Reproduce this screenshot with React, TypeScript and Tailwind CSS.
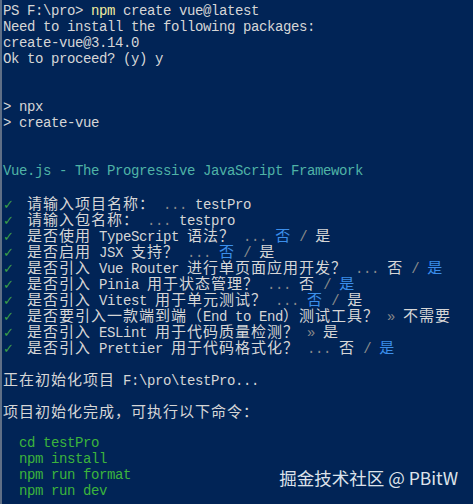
const CJK = /([\u2e80-\u9fff\uff00-\uffef\u3000-\u303f]+)/;

function Txt({ s }: { s: string }) {
  return (
    <>
      {s.split(CJK).map((part, i) =>
        CJK.test(part) ? (
          <span
            key={i}
            className="inline-block h-[16px] font-['Noto_Sans_CJK_SC',sans-serif] text-[15px] tracking-[1px] leading-[16px]"
          >
            {part}
          </span>
        ) : (
          <span key={i}>{part}</span>
        )
      )}
    </>
  );
}

function Line({ children }: { children?: React.ReactNode }) {
  return <div className="h-[16px] leading-[16px] whitespace-pre">{children}</div>;
}

const Check = () => (
  <span className="inline-block w-[16px] h-[16px] text-[#3c9f46] font-['DejaVu_Sans',sans-serif] text-[13px]">✓</span>
);

function Choice({ pick }: { pick: "no" | "yes" }) {
  const on = "text-[#3b8eea] underline underline-offset-2";
  return (
    <>
      <span className={pick === "no" ? on : ""}>
        <Txt s="否" />
      </span>
      <span className="text-[#8a8a8a]"> / </span>
      <span className={pick === "yes" ? on : ""}>
        <Txt s="是" />
      </span>
    </>
  );
}

interface Q {
  label: string;
  sep?: "..." | "»";
  answer?: string;
  pick?: "no" | "yes";
}

const questions: Q[] = [
  { label: "请输入项目名称：", answer: "testPro" },
  { label: "请输入包名称：", answer: "testpro" },
  { label: "是否使用 TypeScript 语法？", pick: "no" },
  { label: "是否启用 JSX 支持？", pick: "no" },
  { label: "是否引入 Vue Router 进行单页面应用开发？", pick: "yes" },
  { label: "是否引入 Pinia 用于状态管理？", pick: "yes" },
  { label: "是否引入 Vitest 用于单元测试？", pick: "no" },
  { label: "是否要引入一款端到端（End to End）测试工具？", sep: "»", answer: "不需要" },
  { label: "是否引入 ESLint 用于代码质量检测？", sep: "»", answer: "是" },
  { label: "是否引入 Prettier 用于代码格式化？", pick: "yes" },
];

export default function App() {
  return (
    <div className="relative w-[473px] h-[504px] overflow-hidden bg-[#012456] border-l-2 border-[#5f6f86] pl-[1px] pt-[3px] text-[#d6d6d6] font-['Liberation_Mono',monospace] text-[14px] tracking-[-0.4px]">
      <Line>
        PS F:\pro&gt; <span className="text-[#f1eea0]">npm</span> create vue@latest
      </Line>
      <Line>Need to install the following packages:</Line>
      <Line>create-vue@3.14.0</Line>
      <Line>Ok to proceed? (y) y</Line>
      <Line />
      <Line />
      <Line>&gt; npx</Line>
      <Line>&gt; create-vue</Line>
      <Line />
      <Line />
      <Line>
        <span className="text-[#4fb3a6]">Vue.js - The Progressive JavaScript Framework</span>
      </Line>
      <Line />
      {questions.map((q) => (
        <Line key={q.label}>
          <Check /> <Txt s={q.label} />{" "}
          <span className="text-[#8a8a8a]">{q.sep ?? "..."}</span>{" "}
          {q.pick ? <Choice pick={q.pick} /> : <Txt s={q.answer ?? ""} />}
        </Line>
      ))}
      <Line />
      <Line>
        <Txt s="正在初始化项目 F:\pro\testPro..." />
      </Line>
      <Line />
      <Line>
        <Txt s="项目初始化完成，可执行以下命令：" />
      </Line>
      <Line />
      <div className="text-[#3cb43c]">
        <Line>  cd testPro</Line>
        <Line>  npm install</Line>
        <Line>  npm run format</Line>
        <Line>  npm run dev</Line>
      </div>
      <div className="absolute right-[15px] bottom-[15px] font-['Noto_Sans_CJK_SC',sans-serif] text-[17.5px] leading-[22px] tracking-normal text-[#dde2ea]">
        掘金技术社区 @ PBitW
      </div>
    </div>
  );
}
